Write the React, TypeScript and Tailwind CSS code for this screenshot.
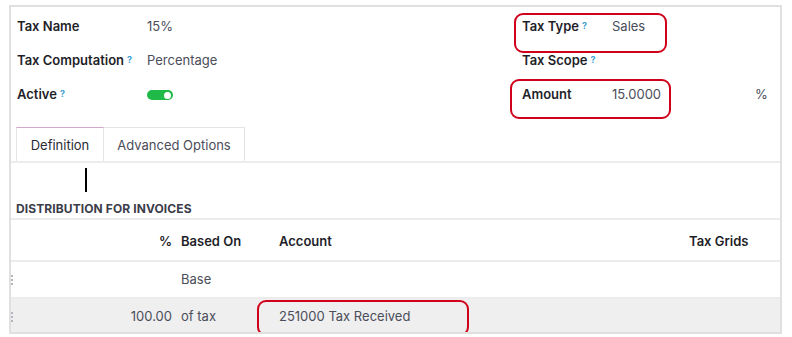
import React from "react";

const Q = () => (
  <sup className="ml-[3px] text-[9px] font-bold text-[#3f9fd0] relative top-[-2px]">?</sup>
);

const Handle = () => (
  <div className="flex flex-col gap-[2px] w-[2px]">
    <span className="w-[2px] h-[2px] bg-[#b4b4bc]" />
    <span className="w-[2px] h-[2px] bg-[#b4b4bc]" />
    <span className="w-[2px] h-[2px] bg-[#b4b4bc]" />
  </div>
);

export default function App() {
  return (
    <div
      className="w-[792px] h-[337px] bg-white pt-[5px] pl-[9px] text-[13px]"
      style={{ fontFamily: "Inter, 'Noto Sans', sans-serif" }}
    >
      <div className="relative w-[773px] h-[329px] border-2 border-[#e0e0e0] overflow-hidden">
        {/* top fields */}
        <div className="flex pt-[3px]">
          <div className="w-[511px] pl-[6px]">
            <div className="flex items-center h-[34px]">
              <div className="w-[130px] font-semibold text-[#1f1f29]">Tax Name</div>
              <div className="text-[#4a4d5a]">15%</div>
            </div>
            <div className="flex items-center h-[34px]">
              <div className="w-[130px] font-semibold text-[#1f1f29]">
                Tax Computation<Q />
              </div>
              <div className="text-[#4a4d5a]">Percentage</div>
            </div>
            <div className="flex items-center h-[34px]">
              <div className="w-[130px] font-semibold text-[#1f1f29]">
                Active<Q />
              </div>
              <div className="relative w-[26px] h-[10px] rounded-full bg-[#1fba48]">
                <span className="absolute right-[2px] top-[1.5px] w-[7px] h-[7px] rounded-full bg-white" />
              </div>
            </div>
          </div>
          <div className="flex-1">
            <div className="flex items-center h-[34px]">
              <div className="w-[90px] font-semibold text-[#1f1f29]">
                Tax Type<Q />
              </div>
              <div className="text-[#4a4d5a]">Sales</div>
            </div>
            <div className="flex items-center h-[34px]">
              <div className="w-[90px] font-semibold text-[#1f1f29]">
                Tax Scope<Q />
              </div>
            </div>
            <div className="flex items-center h-[34px]">
              <div className="w-[90px] font-semibold text-[#1f1f29]">Amount</div>
              <div className="w-[143px] text-[#4a4d5a]">15.0000</div>
              <div className="text-[#4a4d5a]">%</div>
            </div>
          </div>
        </div>

        {/* tabs */}
        <div className="mt-[15px] flex pl-[5px] border-b-2 border-[#ececec]">
          <div className="w-[88px] h-[34px] pt-[3px] flex items-center justify-center border-t border-t-[#d3a6cb] border-x border-x-[#e4e4e4] text-[#2b2b36] bg-white">
            Definition
          </div>
          <div className="w-[141px] h-[34px] pt-[3px] flex items-center justify-center border-t border-r border-[#e4e4e4] text-[#4a4d5a]">
            Advanced Options
          </div>
        </div>

        {/* cursor */}
        <div className="h-[37px] pl-[74px] pt-[5px]">
          <div className="w-[2px] h-[24px] bg-black" />
        </div>

        <div className="pl-[5px] h-[18px] text-[12px] font-bold text-[#3b3d4a] tracking-[0.1px]">
          DISTRIBUTION FOR INVOICES
        </div>

        {/* table */}
        <div className="border-t-2 border-[#ececec]">
          <div className="flex items-center h-[42px] pt-[4px] font-semibold text-[#1f1f29] border-b-2 border-[#ececec]">
            <div className="w-[161px] text-right">%</div>
            <div className="w-[107px] pl-[9px]">Based On</div>
            <div className="w-[410px]">Account</div>
            <div>Tax Grids</div>
          </div>
          <div className="flex items-center h-[37px] text-[#4a4d5a] border-b-2 border-[#ececec]">
            <div className="w-[161px] flex items-center">
              <Handle />
            </div>
            <div className="w-[107px] pl-[9px]">Base</div>
          </div>
          <div className="flex items-center h-[36px] text-[#4a4d5a] bg-[#efefef]">
            <div className="w-[161px] flex items-center justify-between">
              <Handle />
              <span>100.00</span>
            </div>
            <div className="w-[107px] pl-[9px]">of tax</div>
            <div>251000 Tax Received</div>
          </div>
        </div>

        {/* red annotation boxes */}
        <div className="absolute left-[503px] top-[6px] w-[153px] h-[40px] border-2 border-[#d0021b] rounded-[9px]" />
        <div className="absolute left-[499px] top-[72px] w-[161px] h-[40px] border-2 border-[#d0021b] rounded-[9px]" />
        <div className="absolute left-[246px] top-[293px] w-[212px] h-[36px] border-2 border-[#d0021b] rounded-[9px]" />
      </div>
    </div>
  );
}
